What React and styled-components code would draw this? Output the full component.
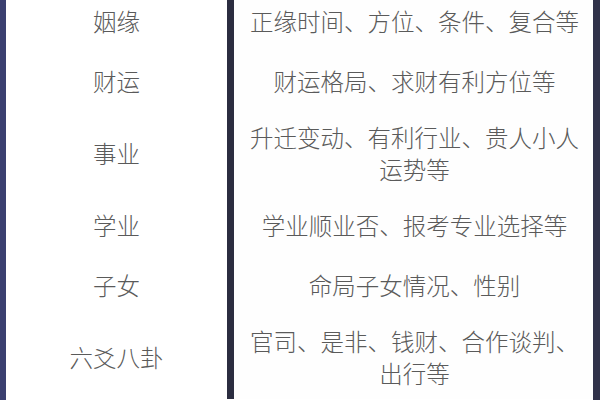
import React from 'react';
import styled, { createGlobalStyle } from 'styled-components';

const GlobalStyle = createGlobalStyle`
  html, body {
    margin: 0;
    padding: 0;
    background: #ffffff;
    overflow: hidden;
  }
  body {
    font-family: "Noto Sans CJK SC", "Noto Sans", sans-serif;
  }
`;

const rows = [
  { topic: '姻缘', detail: '正缘时间、方位、条件、复合等' },
  { topic: '财运', detail: '财运格局、求财有利方位等' },
  { topic: '事业', detail: '升迁变动、有利行业、贵人小人运势等' },
  { topic: '学业', detail: '学业顺业否、报考专业选择等' },
  { topic: '子女', detail: '命局子女情况、性别' },
  { topic: '六爻八卦', detail: '官司、是非、钱财、合作谈判、出行等' },
];

export default function App() {
  return (
    <>
      <GlobalStyle />
      <Table>
        {rows.map((row) => (
          <Row key={row.topic}>
            <Topic>{row.topic}</Topic>
            <Detail>{row.detail}</Detail>
          </Row>
        ))}
      </Table>
    </>
  );
}

const Table = styled.div`
  width: 600px;
  height: 409px;
  margin-top: -9px;
  box-sizing: border-box;
  display: flex;
  flex-direction: column;
  border-left: 6px solid #3b4070;
  border-right: 7px solid #30324a;
  background: #ffffff;
`;

const Row = styled.div`
  display: grid;
  grid-template-columns: 228px 1fr;
  min-height: 60px;
`;

const Cell = styled.div`
  display: flex;
  align-items: center;
  justify-content: center;
  text-align: center;
  padding: 10px 4px;
  box-sizing: border-box;
  font-size: 23.5px;
  line-height: 32px;
  font-weight: 300;
  color: #5a5a5a;
`;

const Topic = styled(Cell)`
  border-right: 7px solid #2b2d40;
`;

const Detail = styled(Cell)`
  padding-left: 6px;
  background: #fefefe;
`;
